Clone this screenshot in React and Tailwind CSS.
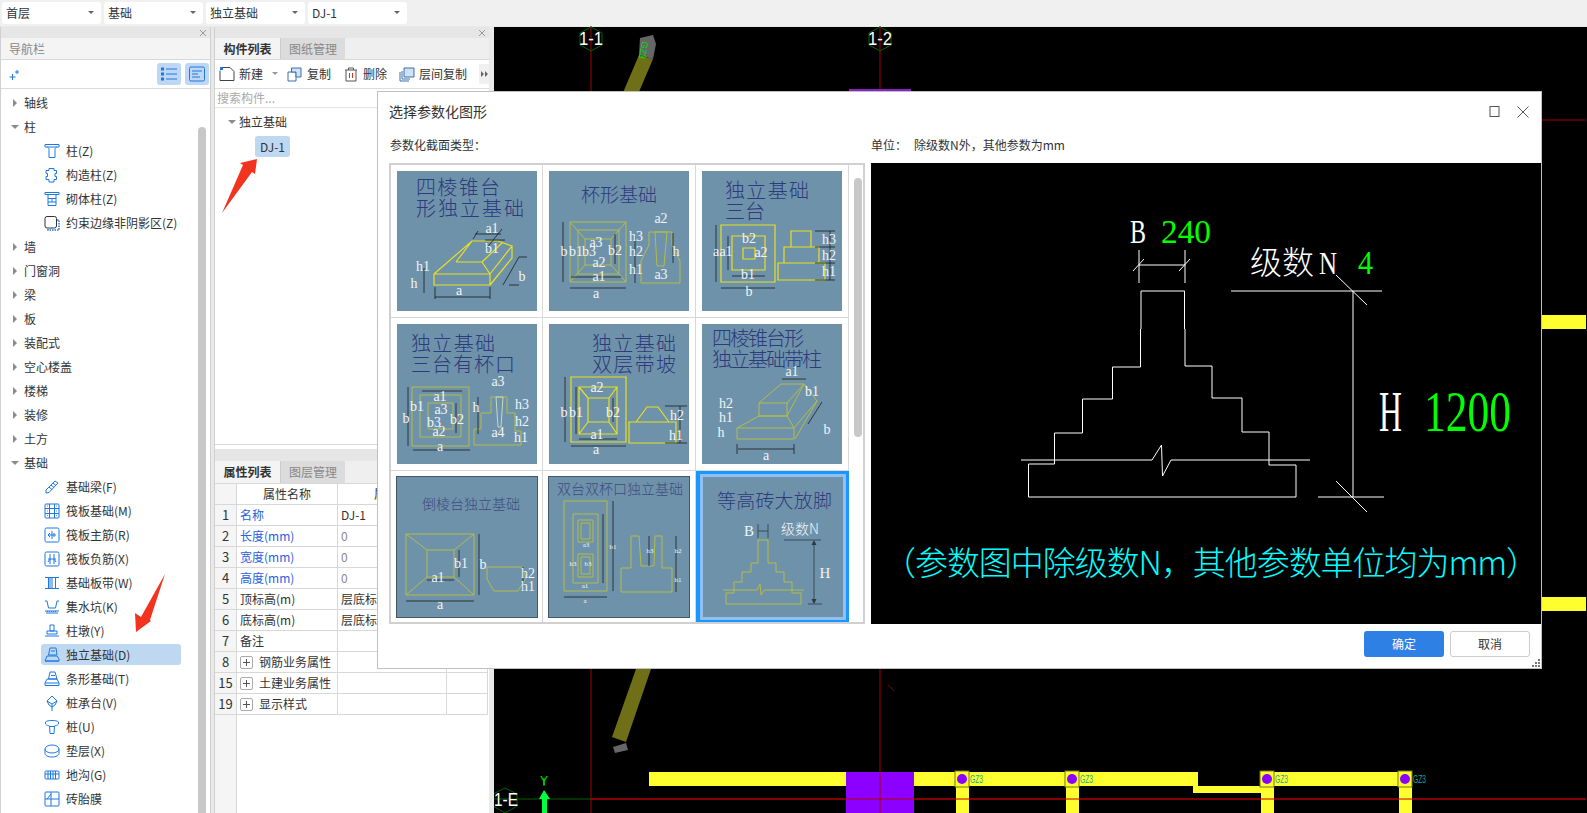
import React from "react";

const B = "#1e78e0";
const Ic = ({ children }) => (
  <svg width="16" height="16" viewBox="0 0 16 16" fill="none" stroke={B} strokeWidth="1" className="shrink-0">{children}</svg>
);
const icons = {
  zhu: <Ic><path d="M1 1.5h14v2.5h-14zM3.5 4c1 1 1.5 1 1.5 2.5v8h6v-8c0-1.5.5-1.5 1.5-2.5" /></Ic>,
  gz: <Ic><path d="M5 1.5h5v2h2.5v3h-1.5v3h1.5v3h-2.5v2.5h-5v-2.5h-3v-3h1.5v-3h-1.5v-3h3z" /></Ic>,
  qt: <Ic><path d="M1 1.5h14v2h-14zM3 3.5h10M4 3.5v11h8v-11M4 7.5h8M4 11h8M8 7.5v3.5" /></Ic>,
  yue: <Ic><rect x="1" y="1.5" width="11.5" height="11.5" rx="2" stroke="#333" /><path d="M13 5h2v10h-11v-2" strokeDasharray="1.5 1" strokeWidth="1.5" /></Ic>,
  liang: <Ic><path d="M2 11l9-9 3 2-9 9.5-3 .5zM5 8l3 2.5M7 6l3 2.5M9 4l3 2.5" /></Ic>,
  fb: <Ic><rect x="1" y="1" width="14" height="14" rx="1" /><path d="M5.500 1v14M10.500 1v14M1 5.500h14M1 10.500h14" /><path d="M3 3h1M8 3h0M12 3h1M3 8h1M12 8h1M3 12.500h1M12 12.500h1" strokeWidth=".8" /></Ic>,
  zj: <Ic><rect x="1" y="1" width="14" height="14" rx="1.5" /><path d="M8 4v8M4 8h8M6 6L4 8l2 2M10 6v4" /></Ic>,
  fj: <Ic><rect x="1" y="1" width="14" height="14" rx="1.5" /><path d="M6 3v10M10 3v10M4 8h8M6 8l-2 3M10 8l2 3" /></Ic>,
  bd: <Ic><path d="M1 2.500h14M1 13.500h14M4.500 3v10M8 3v10M11.500 3v10M6 3v10" /></Ic>,
  jsk: <Ic><path d="M1 2h2l1.500 7h7l1.500-7h2M1 12h14M2 14h12" /><path d="M3 12.500h10" strokeDasharray="1 1" /></Ic>,
  zd: <Ic><path d="M6 2h4v6h-4zM3 8h10v3h-10zM1 13h14" /></Ic>,
  dl: <Ic><path d="M6 1h6l1 7H4.500zM1 14l2-5h10l2 3v2zM1 14h14M7 4h4" /></Ic>,
  tx: <Ic><path d="M6 1h5l2 7H4.500zM1 12l2-4h10l2 4v2.500H1zM1 12h14M7 4.500h4" /></Ic>,
  czt: <Ic><path d="M8 1l5 5-2 4-3 2-3-2-2-4zM3 6l5 3 5-3M8 9v7" /></Ic>,
  z: <Ic><path d="M1.500 3c1-2 12-2 13 0v2c-1 1.500-3 1.500-4 2l-.5 7.500h-4L5.500 7c-1-.5-3-.5-4-2zM6 7.500h4" /></Ic>,
  dc: <Ic><ellipse cx="8" cy="6" rx="7" ry="4" /><path d="M1 6v4.500c0 2 3 3.500 7 3.500s7-1.500 7-3.500V6" /></Ic>,
  dg: <Ic><rect x="1" y="4" width="14" height="8" rx="1" /><path d="M4 4v8M6.500 4v8M9 4v8M11.500 4v8M1 7h14" /></Ic>,
  ztm: <Ic><rect x="1" y="1" width="14" height="14" rx="1" /><path d="M7 1v14M1 8h14M3 8l4-5" /></Ic>,
};

const tree = [
  ["轴线", "c"], ["柱", "o"],
  ["柱(Z)", "zhu"], ["构造柱(Z)", "gz"], ["砌体柱(Z)", "qt"], ["约束边缘非阴影区(Z)", "yue"],
  ["墙", "c"], ["门窗洞", "c"], ["梁", "c"], ["板", "c"], ["装配式", "c"], ["空心楼盖", "c"], ["楼梯", "c"], ["装修", "c"], ["土方", "c"], ["基础", "o"],
  ["基础梁(F)", "liang"], ["筏板基础(M)", "fb"], ["筏板主筋(R)", "zj"], ["筏板负筋(X)", "fj"], ["基础板带(W)", "bd"], ["集水坑(K)", "jsk"], ["柱墩(Y)", "zd"],
  ["独立基础(D)", "dl", true], ["条形基础(T)", "tx"], ["桩承台(V)", "czt"], ["桩(U)", "z"], ["垫层(X)", "dc"], ["地沟(G)", "dg"], ["砖胎膜", "ztm"],
];

const Caret = ({ open }) =>
  open ? (
    <svg width="8" height="8" viewBox="0 0 8 8" className="shrink-0"><path d="M0 2h8L4 6z" fill="#8a8a8a" /></svg>
  ) : (
    <svg width="8" height="8" viewBox="0 0 8 8" className="shrink-0"><path d="M2 0l4 4-4 4z" fill="#8a8a8a" /></svg>
  );

const Strip = () => (
  <div className="h-[11px] bg-[#e6e6e6] flex items-center justify-end pr-[3px]">
    <svg width="8" height="8" viewBox="0 0 8 8"><path d="M1 1l6 6M7 1L1 7" stroke="#999" /></svg>
  </div>
);

const Sel = ({ t }) => (
  <div className="w-[99px] h-[22px] bg-white rounded-[3px] flex items-center justify-between pl-[4px] pr-[7px] text-[12px] text-[#333]">
    <span>{t}</span>
    <svg width="6" height="4" viewBox="0 0 6 4"><path d="M0 0h6L3 3z" fill="#666" /></svg>
  </div>
);

const ToolText = ({ children }) => <span className="text-[12px] text-[#333] leading-none whitespace-nowrap shrink-0">{children}</span>;

const rows = [
  ["1", "名称", "DJ-1", 1],
  ["2", "长度(mm)", "0", 1],
  ["3", "宽度(mm)", "0", 1],
  ["4", "高度(mm)", "0", 1],
  ["5", "顶标高(m)", "层底标高", 0],
  ["6", "底标高(m)", "层底标高", 0],
  ["7", "备注", "", 0],
  ["8", "钢筋业务属性", "", 2],
  ["15", "土建业务属性", "", 2],
  ["19", "显示样式", "", 2],
];

const Y = "#e8e020";
const O = "#b4bc48";
const D = "#1c1c1c";
const W = "#f2f4f6";
const T = "#2d3a7c";
const Title = ({ x, y, s = 19, w, c = T, children }) => (
  <text x={x} y={y} fontSize={s} fill={c} fontFamily="Noto Sans CJK SC" fontWeight="300" textLength={w} lengthAdjust="spacing">{children}</text>
);
const L = ({ x, y, s = 14, c = W, children }) => (
  <text x={x} y={y} fontSize={s} fill={c} fontFamily="Liberation Serif" textAnchor="middle">{children}</text>
);
const P = ({ d, c = O, w = 1 }) => <path d={d} fill="none" stroke={c} strokeWidth={w} />;
const Arrow = ({ d }) => <path d={d} fill="none" stroke={D} strokeWidth=".8" />;

const Thumb = ({ children, border }) => (
  <svg width="140" height="140" viewBox="0 0 140 140" className={border ? "bg-[#6f92ab] outline outline-1 outline-[#45586b]" : "bg-[#6f92ab]"}>{children}</svg>
);

const thumbs = [
  <Thumb key="1">
    <Title x={19} y={24} s={20} w={84}>四棱锥台</Title>
    <Title x={19} y={45} s={20} w={108}>形独立基础</Title>
    <P c={Y} w={1.2} d="M37 103h56v11H37zM37 103L75 70H101L115 75L93 103M115 75V87L93 114M59 91H85L93 103M59 91L75 70M85 91L105 72" />
    <Arrow d="M38 116v12M93 116v12M38 126h55M27 97v25M78 63h26M76 68l5-8M105 58l-16 20M122 86l-16 28M112 114h10M122 86h8M88 69h20" />
    <L x={26} y={100}>h1</L><L x={17} y={117}>h</L><L x={62} y={124}>a</L><L x={95} y={62}>a1</L><L x={95} y={82}>b1</L><L x={125} y={110}>b</L>
  </Thumb>,
  <Thumb key="2">
    <Title x={32} y={31} s={19} w={76}>杯形基础</Title>
    <P d="M21 51h56v60H21zM29 59h41v44H29zM36 68h26v26H36zM21 51l15 17M77 51L62 68M21 111l15-17M77 111L62 94M100 61h23v13l8 16v22H92V90l8-16zM106 61h12l-3 34h-7z" />
    <Arrow d="M21 117h56M14 51v60M22 106h50M66 63v30M86 65v47M124 62v30" />
    <L x={15} y={85}>b</L><L x={27} y={85}>b1</L><L x={40} y={85}>b3</L><L x={66} y={84}>b2</L><L x={47} y={76}>a3</L><L x={50} y={96}>a2</L><L x={50} y={110}>a1</L><L x={47} y={127}>a</L><L x={87} y={70}>h3</L><L x={87} y={85}>h2</L><L x={87} y={103}>h1</L><L x={112} y={52}>a2</L><L x={127} y={85}>h</L><L x={112} y={108}>a3</L>
  </Thumb>,
  <Thumb key="3">
    <Title x={23} y={27} s={20} w={84}>独立基础</Title>
    <Title x={23} y={48} s={20} w={40}>三台</Title>
    <P c={Y} w={1.2} d="M19 54h54v57H19zM30 65h33v34H30zM41 77h12v11H41zM89 60h20v16H89zM82 76h35v16H82zM76 92h47v17H76z" />
    <Arrow d="M14 54v57M26 65v34M30 105h33M19 117h54M113 60h20M113 76h20M113 92h20M113 109h20M128 60v49" />
    <L x={14} y={85}>a</L><L x={24} y={85}>a1</L><L x={47} y={72}>b2</L><L x={59} y={86}>a2</L><L x={46} y={108}>b1</L><L x={47} y={125}>b</L><L x={127} y={73}>h3</L><L x={127} y={89}>h2</L><L x={127} y={105}>h1</L>
  </Thumb>,
  <Thumb key="4">
    <Title x={14} y={27} s={20} w={84}>独立基础</Title>
    <Title x={14} y={48} s={20} w={104}>三台有杯口</Title>
    <P d="M15 63h57v59H15zM23 71h41v42H23zM31 79h25v26H31zM94 73h16v16h8v18h6v14H77v-16h7V89h10z" />
    <P c="#c8d8c0" d="M99 73h7l-2 30h-3z" />
    <Arrow d="M11 63v59M16 126h57M25 67h40M59 79v30M81 73v37" />
    <L x={43} y={77}>a1</L><L x={20} y={87}>b1</L><L x={44} y={90}>a3</L><L x={9} y={99}>b</L><L x={37} y={103}>b3</L><L x={60} y={100}>b2</L><L x={42} y={112}>a2</L><L x={43} y={127}>a</L><L x={101} y={62}>a3</L><L x={79} y={88}>h</L><L x={101} y={113}>a4</L><L x={125} y={85}>h3</L><L x={125} y={102}>h2</L><L x={124} y={118}>h1</L>
  </Thumb>,
  <Thumb key="5">
    <Title x={43} y={27} s={20} w={84}>独立基础</Title>
    <Title x={43} y={48} s={20} w={84}>双层带坡</Title>
    <P c={Y} w={1.2} d="M22 53h55v65H22zM30 63h38v47H30zM39 74h21v24H39zM30 63l9 11M68 63l-8 11M30 110l9-12M68 110l-8-12M80 98h47v21H80zM87 98l11-15h11l11 15" />
    <Arrow d="M16 53v65M27 63v47M22 122h55M30 115h38M64 74v24M116 82h22M116 119h22M131 82v37" />
    <L x={47} y={130}>a</L><L x={15} y={93}>b</L><L x={27} y={93}>b1</L><L x={64} y={93}>b2</L><L x={48} y={68}>a2</L><L x={48} y={115}>a1</L><L x={128} y={96}>h2</L><L x={127} y={116}>h1</L>
  </Thumb>,
  <Thumb key="6">
    <Title x={10} y={22} s={20} w={92}>四棱锥台形</Title>
    <Title x={10} y={43} s={20} w={110}>独立基础带柱</Title>
    <P d="M35 104h57v11H35zM35 104l22-12h28l7 12M57 79h28v13H57zM57 79l22-19h23l-17 19M85 92l17-32M92 104l23-27-22 38M102 60l13 17" />
    <Arrow d="M35 120v10M92 120v10M36 125h56M80 55h24M120 78l-14 22" />
    <L x={64} y={136}>a</L><L x={90} y={52}>a1</L><L x={110} y={72}>b1</L><L x={125} y={110}>b</L><L x={24} y={84}>h2</L><L x={24} y={98}>h1</L><L x={19} y={113}>h</L>
  </Thumb>,
  <Thumb key="7" border>
    <Title x={25} y={32} s={14} w={98} c="#3c4a80">倒棱台独立基础</Title>
    <P d="M9 57h68v61H9zM30 73h27v27H30zM9 57l21 16M77 57L57 73M9 118l21-18M77 118L57 100M90 90h35l4 11-8 13H97l-7-12z" />
    <Arrow d="M82 57v61M9 124h68M30 103h27M62 73v27M126 90v24" />
    <L x={41} y={105}>a1</L><L x={64} y={91}>b1</L><L x={86} y={92}>b</L><L x={43} y={132}>a</L><L x={131} y={101}>h2</L><L x={131} y={114}>h1</L>
  </Thumb>,
  <Thumb key="8" border>
    <Title x={8} y={17} s={14} w={126} c="#3c4a80">双台双杯口独立基础</Title>
    <P d="M15 24h43v90H15zM24 37h25v69H24zM29 43h15v22H29zM32 46h9v16h-9zM29 77h15v23H29zM32 80h9v17h-9zM72 91h10V59h8l2 30h13l1-30h7v32h10v24H72z" />
    <Arrow d="M64 24v90M54 37v69M15 120h43M127 59v56M100 59v30" />
    <L x={37} y={70} s={7}>a3</L><L x={64} y={72} s={7}>b1</L><L x={36} y={111} s={7}>a1</L><L x={36} y={126} s={7}>a</L><L x={24} y={89} s={7}>h3</L><L x={39} y={89} s={7}>b3</L><L x={101} y={76} s={7}>h3</L><L x={129} y={76} s={7}>h2</L><L x={129} y={105} s={7}>h1</L>
  </Thumb>,
  <Thumb key="9">
    <Title x={14} y={31} s={19} w={115}>等高砖大放脚</Title>
    <P d="M55 63h10v23h8v9h8v10h8v11h9v11H23v-11h8v-11h8V95h9v-9h7zM20 113h34l3-6 1 11 3-5h40" />
    <path d="M55 47v14M65 47v14M55 54h10M81 63h37M111 65v61M105 127h14" stroke="#3a4a5a" fill="none" />
    <path d="M111 63l-2.500 5h5zM111 127l-2.500-5h5z" fill="#2c3a48" />
    <L x={46} y={59} s={15}>B</L>
    <text x={78} y={57} fontSize="14" fill={W} fontFamily="Noto Sans CJK SC" fontWeight="300">级数N</text>
    <L x={122} y={101} s={15}>H</L>
  </Thumb>,
];

export default function App() {
  return (
    <div className="relative w-[1587px] h-[813px] overflow-hidden bg-[#e9e9e9] text-[12px] text-[#333] font-['Noto_Sans_CJK_SC',sans-serif]">
      <div className="h-[26px] bg-[#f0f0f0] flex items-center gap-[3px] pl-[2px]">
        <Sel t="首层" /><Sel t="基础" /><Sel t="独立基础" /><Sel t="DJ-1" />
      </div>
      <div className="flex h-[787px] pt-[1px]">
        {/* left nav */}
        <div className="w-[211px] shrink-0 flex flex-col border-l border-[#d0d0d0] border-r overflow-hidden bg-white">
          <Strip />
          <div className="h-[22px] bg-[#f4f4f4] flex items-center pl-[8px] text-[#888] border-b border-[#d8d8d8]">导航栏</div>
          <div className="h-[29px] flex items-center border-b border-[#dcdcdc] pl-[8px] pr-[1px]">
            <svg width="11" height="11" viewBox="0 0 11 11"><path d="M3.500 5v6M.5 8h6M8 1v4M6 3h4" stroke={B} /></svg>
            <div className="ml-auto flex gap-[4px]">
              <div className="w-[24px] h-[22px] rounded-[3px] bg-[#bdd7f4] flex items-center justify-center">
                <svg width="16" height="14" viewBox="0 0 16 14" fill="none" stroke={B}><path d="M5 2h11M5 7h11M5 12h11" /><rect x=".5" y="1" width="2" height="2" /><rect x=".5" y="6" width="2" height="2" /><rect x=".5" y="11" width="2" height="2" /></svg>
              </div>
              <div className="w-[24px] h-[22px] rounded-[3px] bg-[#bdd7f4] flex items-center justify-center">
                <svg width="16" height="16" viewBox="0 0 16 16" fill="none" stroke={B}><rect x=".5" y="1" width="15" height="14" rx="1.500" /><path d="M3 5h10M3 8h6M3 11h8" /></svg>
              </div>
            </div>
          </div>
          <div className="flex flex-1 min-h-0 pt-[2px]">
            <div className="flex-1 min-w-0">
              {tree.map(([t, k, sel]) =>
                k === "c" || k === "o" ? (
                  <div key={t} className="h-[24px] flex items-center pl-[10px] gap-[5px]">
                    <Caret open={k === "o"} />
                    <span>{t}</span>
                  </div>
                ) : (
                  <div key={t} className="h-[24px] pt-[1px]">
                    <div className={`ml-[40px] w-[140px] h-[21px] rounded-[3px] pl-[3px] flex items-center gap-[6px] ${sel ? "bg-[#bfd8f2]" : ""}`}>
                      {icons[k]}
                      <span className="whitespace-nowrap">{t}</span>
                    </div>
                  </div>
                )
              )}
            </div>
            <div className="w-[12px] shrink-0 pr-[2px] pt-[36px]">
              <div className="w-[8px] h-full rounded-t-[4px] bg-[#c8c8c8]" />
            </div>
          </div>
        </div>
        {/* center */}
        <div className="w-[275px] shrink-0 ml-[3px] flex flex-col bg-white border-l border-[#d0d0d0] overflow-hidden">
          <Strip />
          <div className="h-[22px] bg-[#efefef] flex border-b border-[#d8d8d8]">
            <div className="w-[65px] bg-[#f4f4f4] font-bold flex items-center justify-center">构件列表</div>
            <div className="w-[65px] bg-[#dcdcdc] text-[#888] flex items-center justify-center border-l border-[#ccc]">图纸管理</div>
          </div>
          <div className="h-[29px] shrink-0 flex items-center pl-[4px] border-b border-[#dcdcdc]">
            <svg className="shrink-0" width="16" height="16" viewBox="0 0 16 16" fill="none" stroke="#444"><path d="M4 1.500h7l4 4v9H1v-10" /><path d="M1 1h3v3H1z" fill={B} stroke="none" /></svg>
            <span className="ml-[4px] shrink-0"><ToolText>新建</ToolText></span>
            <svg className="ml-[9px] shrink-0" width="6" height="4" viewBox="0 0 6 4"><path d="M0 0h6L3 3z" fill="#999" /></svg>
            <svg className="ml-[9px] shrink-0" width="15" height="15" viewBox="0 0 15 15" fill="none" stroke="#3a6ea8"><path d="M1 5h8v9H1z" fill="#fff" /><path d="M4.500 1h9.500v9H9V5H4.500z" fill="#cfe2f8" /></svg>
            <span className="ml-[5px] shrink-0"><ToolText>复制</ToolText></span>
            <svg className="ml-[13px] shrink-0" width="14" height="15" viewBox="0 0 14 15" fill="none" stroke="#555"><path d="M1 3h12M4.500 3V1h5v2M2 3v11h10V3" /><path d="M5.500 6v5M8.500 6v5" stroke="#e03020" /></svg>
            <span className="ml-[5px] shrink-0"><ToolText>删除</ToolText></span>
            <svg className="ml-[12px] shrink-0" width="16" height="15" viewBox="0 0 16 15" fill="none" stroke="#3a6ea8"><path d="M1 5v9h9M3 4v8h8" /><path d="M5 1h10v9H5z" fill="#cfe2f8" /></svg>
            <span className="ml-[4px] shrink-0"><ToolText>层间复制</ToolText></span>
            <div className="ml-[12px] w-[10px] h-[20px] shrink-0 bg-[#f0f0f0] flex items-center justify-center">
              <svg width="7" height="6" viewBox="0 0 7 6"><path d="M0 0l3 3-3 3zM4 0l3 3-3 3z" fill="#666" /></svg>
            </div>
          </div>
          <div className="h-[19px] shrink-0 flex items-center pl-[2px] text-[#aaa] border-b border-[#e2e2e2]">搜索构件...</div>
          <div className="h-[337px] shrink-0 border-b border-[#dcdcdc]">
            <div className="flex items-center pl-[13px] h-[28px] gap-[3px]"><Caret open /><span>独立基础</span></div>
            <div className="ml-[40px] w-[35px] h-[21px] rounded-[3px] bg-[#bfd8f2] flex items-center justify-center">DJ-1</div>
          </div>
          <div className="h-[4px] shrink-0 bg-white" />
          <div className="h-[12px] shrink-0 bg-[#e6e6e6]" />
          <div className="h-[23px] shrink-0 bg-[#efefef] flex border-b border-[#d8d8d8]">
            <div className="w-[65px] bg-[#f4f4f4] font-bold flex items-center justify-center">属性列表</div>
            <div className="w-[65px] bg-[#dcdcdc] text-[#888] flex items-center justify-center border-l border-[#ccc]">图层管理</div>
          </div>
          <div className="grid grid-cols-[22px_101px_109px_41px] auto-rows-[21px] shrink-0">
            <div className="bg-[#f5f5f5] border-r border-b border-[#d8d8d8]" />
            <div className="border-r border-b border-[#d8d8d8] flex items-center justify-center">属性名称</div>
            <div className="border-r border-b border-[#d8d8d8] flex items-center justify-center">属性值</div>
            <div className="border-r border-b border-[#d8d8d8]" />
            {rows.map(([n, a, v, kind]) => (
              <React.Fragment key={n}>
                <div className="bg-[#f5f5f5] border-r border-b border-[#d8d8d8] flex items-center justify-center text-[13px]">{n}</div>
                <div className={`border-r border-b border-[#d8d8d8] flex items-center pl-[3px] ${kind === 1 ? "text-[#2860e0]" : ""}`}>
                  {kind === 2 && (
                    <span className="w-[13px] h-[13px] mr-[6px] border border-[#aaa] rounded-[2px] flex items-center justify-center">
                      <svg width="7" height="7" viewBox="0 0 7 7"><path d="M3.500 0v7M0 3.500h7" stroke="#555" /></svg>
                    </span>
                  )}
                  {a}
                </div>
                <div className={`border-r border-b border-[#d8d8d8] flex items-center pl-[3px] whitespace-nowrap overflow-hidden ${v === "0" ? "text-[#888]" : ""}`}>{v}</div>
                <div className="border-r border-b border-[#d8d8d8]" />
              </React.Fragment>
            ))}
          </div>
          <div className="flex-1 flex">
            <div className="w-[22px] bg-[#f5f5f5] border-r border-[#d8d8d8]" />
          </div>
        </div>
        {/* canvas */}
        <div className="ml-[5px] flex-1 min-w-0 bg-black">
          <svg width="1092" height="787" viewBox="495 26 1092 787" className="block -mt-px">
            <path d="M881 26V813M592 26V813" stroke="#a80000" />
            <path d="M495 120H1587" stroke="#a80000" />
            <path d="M495 799H592" stroke="#006000" />
            <path d="M592 799H1587" stroke="#b80000" />
            <path d="M592 27l11 6v12l-11 6-11-6V33zM881 27l11 6v12l-11 6-11-6V33zM506 788l12 6v12l-12 7-12-7v-12z" fill="none" stroke="#006400" />
            <text x="592" y="45" fill="#fff" fontSize="19" fontFamily="Liberation Sans" textAnchor="middle" textLength="24" lengthAdjust="spacingAndGlyphs">1-1</text>
            <text x="881" y="45" fill="#fff" fontSize="19" fontFamily="Liberation Sans" textAnchor="middle" textLength="24" lengthAdjust="spacingAndGlyphs">1-2</text>
            <text x="507" y="806" fill="#fff" fontSize="19" fontFamily="Liberation Sans" textAnchor="middle" textLength="24" lengthAdjust="spacingAndGlyphs">1-E</text>
            <path d="M640 55l14 4-26 61-14-4zM637 669h15l-25 73-14-5z" fill="#6f6f17" />
            <path d="M641 38l13-3 3 9-3 15-14-4z" fill="#666" />
            <path d="M614 747l13-4 2 7-13 3z" fill="#666" />
            <text x="0" y="0" fontSize="9" fill="#00e000" fontFamily="Liberation Sans" transform="translate(643 41) rotate(100)">GZ3</text>
            <path d="M850 89h62v3h-62z" fill="#8a20c8" />
            <path d="M1542 315h45v14h-45zM1542 597h45v14h-45z" fill="#ffff30" />
            <path d="M650 772H1199V786H650zM1262 772H1413V786H1262zM1194 786h68v7h-68z" fill="#ffff30" />
            <path d="M957 786h13v27h-13zM1067 786h13v27h-13zM1262 786h13v27h-13zM1400 786h13v27h-13z" fill="#ffff30" />
            <path d="M847 772h68v41h-68z" fill="#8c00ff" />
            <path d="M881 772V813M592 799H1587" stroke="#b00000" />
            <path d="M889 685l6 6" stroke="#800000" />
            {[
              [963, 971],
              [1073, 1081],
              [1268, 1276],
              [1406, 1414],
            ].map(([cx, tx]) => (
              <g key={cx}>
                <rect x={cx - 7} y="771" width="14" height="16" fill="#ffff30" stroke="#7a7a10" />
                <circle cx={cx} cy="779" r="5" fill="#8c00ff" />
                <text x={tx} y="783" fontSize="10" fill="#10a8a0" fontFamily="Liberation Sans" textLength="13" lengthAdjust="spacingAndGlyphs">GZ3</text>
              </g>
            ))}
            <path d="M545 786V778" stroke="#00e000" strokeWidth="1" />
            <path d="M545 790l-5 9h3v14h5v-14h3z" fill="#00ff40" />
            <text x="545" y="785" fontSize="12" fill="#00e000" fontFamily="Liberation Sans" textAnchor="middle">Y</text>
          </svg>
        </div>
      </div>

      {/* arrows */}
      <svg width="1587" height="813" viewBox="0 0 1587 813" className="absolute left-0 top-0 pointer-events-none">
        <path d="M257 159l-2 15-3-2-30 41 21-48-3-2z" fill="#f2331f" />
        <path d="M165 574l-15 46 1 1-15 11-1-19 6 4z" fill="#f2331f" />
      </svg>

      {/* dialog */}
      <div className="absolute left-[377px] top-[91px] w-[1165px] h-[578px] bg-white border border-[#c0c0c0] flex flex-col">
        <div className="h-[39px] flex items-center pl-[11px] pr-[12px] text-[14px]">
          <span>选择参数化图形</span>
          <svg className="ml-auto" width="11" height="11" viewBox="0 0 11 11" fill="none" stroke="#555"><rect x="1" y=".5" width="9" height="10" /></svg>
          <svg className="ml-[17px]" width="12" height="12" viewBox="0 0 12 12" fill="none" stroke="#555"><path d="M.5.500l11 11M11.500.500l-11 11" /></svg>
        </div>
        <div className="h-[32px] flex items-center pl-[12px] pb-[4px]">
          <span className="w-[481px]">参数化截面类型：</span>
          <span>单位：</span>
          <span className="ml-[7px]">除级数N外，其他参数为mm</span>
        </div>
        <div className="flex pl-[11px] h-[461px]">
          <div className="w-[476px] h-[461px] border-2 border-[#d0d0d0] flex overflow-hidden">
            <div className="w-[458px] shrink-0 grid grid-cols-[152px_153px_153px] grid-rows-[153px_153px_152px]">
              {thumbs.map((th, i) =>
                i === 8 ? (
                  <div key={i} className="bg-[#1a96ff] flex items-center justify-center">
                    <div className="w-[146px] h-[146px] bg-[#6f92ab] border-[3px] border-[#8fc0f2] flex items-center justify-center">{th}</div>
                  </div>
                ) : (
                  <div key={i} className="flex items-center justify-center border-r border-b border-[#d8d8d8]">{th}</div>
                )
              )}
            </div>
            <div className="flex-1 pl-[5px] pt-[13px]">
              <div className="w-[8px] h-[259px] rounded-[4px] bg-[#c8c8c8]" />
            </div>
          </div>
          <div className="ml-[6px] flex-1 min-w-0 overflow-hidden bg-black">
            <svg width="671" height="461" viewBox="871 163 671 461" className="block">
              <g fill="none" stroke="#fff">
                <path d="M1139 250v33M1185 250v33M1139 265h46M1133 271l11-12M1179 271l11-12" />
                <path d="M1141 329v-38h43.500v38M1140.500 329v38h-28v32h-30v34h-28v31h-26v33h267.500v-32h-27v-33h-27v-34h-30v-32h-27V329" />
                <path d="M1021 460h131l9.500-15 1 31 8.500-16h139" />
                <path d="M1231 291h151M1336 275l31 30M1353 291v206M1318 497h66M1336 481l31 31" />
              </g>
              <text x="1130" y="243" fill="#fff" fontSize="34" fontFamily="Liberation Serif" textLength="16" lengthAdjust="spacingAndGlyphs">B</text>
              <text x="1161" y="243" fill="#00ff00" fontSize="34" fontFamily="Liberation Serif" textLength="50" lengthAdjust="spacingAndGlyphs">240</text>
              <text x="1250" y="274" fill="#fff" fontSize="32" fontFamily="Noto Sans CJK SC" fontWeight="300">级数</text>
              <text x="1319" y="274" fill="#fff" fontSize="32" fontFamily="Liberation Serif" textLength="18" lengthAdjust="spacingAndGlyphs">N</text>
              <text x="1358" y="274" fill="#00ff00" fontSize="34" fontFamily="Liberation Serif" textLength="15" lengthAdjust="spacingAndGlyphs">4</text>
              <text x="1379" y="431" fill="#fff" fontSize="56" fontFamily="Liberation Serif" textLength="23" lengthAdjust="spacingAndGlyphs">H</text>
              <text x="1424" y="431" fill="#00ff00" fontSize="56" fontFamily="Liberation Serif" textLength="87" lengthAdjust="spacingAndGlyphs">1200</text>
              <text x="883" y="575" fill="#00ffff" fontSize="33" fontFamily="Noto Sans CJK SC" fontWeight="300" textLength="656" lengthAdjust="spacing">（参数图中除级数N，其他参数单位均为mm）</text>
            </svg>
          </div>
        </div>
        <div className="flex-1 relative flex items-start justify-end gap-[6px] pt-[7px] pr-[11px]">
          <div className="w-[80px] h-[26px] rounded-[3px] bg-[#2f80e4] text-white flex items-center justify-center">确定</div>
          <div className="w-[80px] h-[26px] rounded-[3px] bg-white border border-[#ccc] flex items-center justify-center">取消</div>
          <svg className="absolute right-[1px] bottom-[1px]" width="8" height="8" viewBox="0 0 8 8" fill="#777">
            <rect x="6" y="0" width="2" height="2" /><rect x="3" y="3" width="2" height="2" /><rect x="6" y="3" width="2" height="2" /><rect x="0" y="6" width="2" height="2" /><rect x="3" y="6" width="2" height="2" /><rect x="6" y="6" width="2" height="2" />
          </svg>
        </div>
      </div>
    </div>
  );
}
